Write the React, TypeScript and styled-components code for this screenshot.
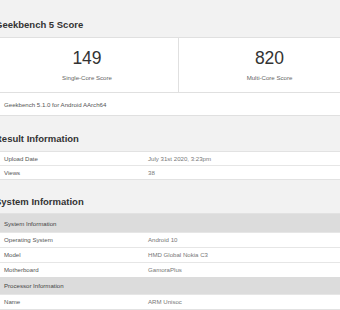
import styled, { createGlobalStyle } from "styled-components";

const GlobalStyle = createGlobalStyle`
  html, body {
    margin: 0;
    padding: 0;
    background: #f2f2f2;
    overflow: hidden;
  }
  body {
    font-family: "Liberation Sans", Arial, sans-serif;
  }
`;

type Row = { label: string; value: string };

const resultRows: Row[] = [
  { label: "Upload Date", value: "July 31st 2020, 3:23pm" },
  { label: "Views", value: "38" },
];

const systemRows: Row[] = [
  { label: "Operating System", value: "Android 10" },
  { label: "Model", value: "HMD Global Nokia C3" },
  { label: "Motherboard", value: "GamoraPlus" },
];

const processorRows: Row[] = [{ label: "Name", value: "ARM Unisoc" }];

const App = () => {
  return (
    <Page>
      <GlobalStyle />
      <Section top={18}>
        <Title>Geekbench 5 Score</Title>
        <ScorePanel>
          <ScoreGrid>
            <ScoreCell divider>
              <ScoreValue>149</ScoreValue>
              <ScoreLabel>Single-Core Score</ScoreLabel>
            </ScoreCell>
            <ScoreCell>
              <ScoreValue>820</ScoreValue>
              <ScoreLabel>Multi-Core Score</ScoreLabel>
            </ScoreCell>
          </ScoreGrid>
          <ScoreFooter>Geekbench 5.1.0 for Android AArch64</ScoreFooter>
        </ScorePanel>
      </Section>

      <Section top={16}>
        <Title>Result Information</Title>
        <Table>
          {resultRows.map((r) => (
            <TableRow key={r.label}>
              <Label>{r.label}</Label>
              <Value>{r.value}</Value>
            </TableRow>
          ))}
        </Table>
      </Section>

      <Section top={15}>
        <Title tight>System Information</Title>
        <Table>
          <HeaderRow>System Information</HeaderRow>
          {systemRows.map((r) => (
            <TableRow key={r.label} tall>
              <Label>{r.label}</Label>
              <Value>{r.value}</Value>
            </TableRow>
          ))}
          <HeaderRow>Processor Information</HeaderRow>
          {processorRows.map((r) => (
            <TableRow key={r.label} tall>
              <Label>{r.label}</Label>
              <Value>{r.value}</Value>
            </TableRow>
          ))}
        </Table>
      </Section>
    </Page>
  );
};

export default App;

const Page = styled.div`
  width: 366px;
  margin-left: -5px;
  background: #f2f2f2;
  min-height: 310px;
`;

const Section = styled.section<{ top: number }>`
  padding-top: ${(p) => p.top}px;
`;

const Title = styled.h2<{ tight?: boolean }>`
  margin: 0 0 ${(p) => (p.tight ? "4px" : "5px")};
  font-size: 9.5px;
  line-height: 14px;
  font-weight: 700;
  color: #333;
`;

const ScorePanel = styled.div`
  background: #fff;
  border: 1px solid #e0e0e0;
`;

const ScoreGrid = styled.div`
  display: grid;
  grid-template-columns: 183px 1fr;
`;

const ScoreCell = styled.div<{ divider?: boolean }>`
  height: 54px;
  padding-top: 10px;
  box-sizing: border-box;
  text-align: center;
  border-right: ${(p) => (p.divider ? "1px solid #e0e0e0" : "none")};
`;

const ScoreValue = styled.div`
  font-size: 17.5px;
  line-height: 20px;
  color: #333;
`;

const ScoreLabel = styled.div`
  margin-top: 6px;
  font-size: 6.1px;
  line-height: 8px;
  color: #666;
`;

const ScoreFooter = styled.div`
  border-top: 1px solid #e0e0e0;
  height: 22px;
  line-height: 24px;
  padding-left: 8px;
  font-size: 6.1px;
  color: #555;
`;

const Table = styled.div`
  background: #fff;
  border: 1px solid #e2e2e2;
`;

const TableRow = styled.div<{ tall?: boolean }>`
  display: grid;
  grid-template-columns: 152px 1fr;
  height: ${(p) => (p.tall ? "14px" : "13px")};
  line-height: ${(p) => (p.tall ? "14px" : "13px")};
  font-size: 6.1px;
  & + & {
    border-top: 1px solid #e6e6e6;
  }
`;

const Label = styled.div`
  padding-left: 8px;
  color: #555;
`;

const Value = styled.div`
  color: #777;
`;

const HeaderRow = styled.div`
  height: 18px;
  line-height: 19px;
  padding-left: 8px;
  background: #dcdcdc;
  font-size: 6.1px;
  color: #444;
  & + ${TableRow} {
    border-top: 1px solid #e6e6e6;
  }
  ${TableRow} + & {
    height: 17px;
    line-height: 18px;
  }
`;
